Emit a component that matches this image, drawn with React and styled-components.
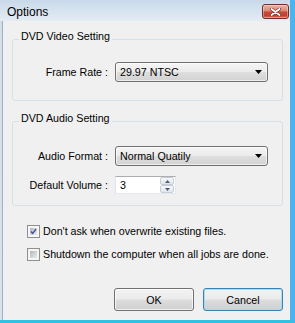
import React from 'react';
import styled, { createGlobalStyle } from 'styled-components';

const Global = createGlobalStyle`
  html, body { margin: 0; padding: 0; background: #ffffff; }
  body { font-family: "Liberation Sans", Arial, sans-serif; color: #000; }
  * { box-sizing: border-box; }
`;

const Window = styled.div`
  width: 295px;
  height: 323px;
  display: flex;
  flex-direction: column;
  background: linear-gradient(#c3d4e6, #d3e0ec 30px, #d6e3ef);
  border-right: 5px solid #4bb4ee;
  border-bottom: 3px solid #2fc2e3;
`;

const TitleBar = styled.div`
  height: 21px;
  flex: none;
  display: flex;
  align-items: flex-start;
  justify-content: space-between;
  padding: 0 1px 0 7px;
  background: linear-gradient(#c9d9ea, #e4ecf4);
`;

const Title = styled.span`
  margin-top: 5px;
  font-size: 12px;
  line-height: 14px;
  color: #000;
`;

const CloseButton = styled.div`
  margin-top: 4px;
  width: 27px;
  height: 15px;
  border: 1px solid #6e2e27;
  border-radius: 3px;
  background: linear-gradient(#eab1a1 0%, #dc8c78 45%, #c94c3d 52%, #c33f31 80%, #d56d55 100%);
  box-shadow: inset 0 0 0 1px rgba(255, 255, 255, 0.35);
  display: flex;
  align-items: center;
  justify-content: center;
`;

const Client = styled.div`
  flex: 1;
  margin-left: 2px;
  border-left: 1px solid #a3afbb;
  background: #f0f0f0;
  display: flex;
  flex-direction: column;
  padding: 9px 7px 9px 9px;
`;

const Group = styled.fieldset`
  margin: ${p => p.$mt || 0}px 0 0 0;
  padding: ${p => p.$pt}px 0 ${p => p.$pb}px 0;
  border: 1px solid #d5dfe5;
  border-radius: 3px;
  min-width: 0;
`;

const Legend = styled.legend`
  margin-left: 6px;
  padding: 0 2px 6px 2px;
  font-size: 10.7px;
  line-height: 12px;
`;

const FieldGrid = styled.div`
  display: grid;
  grid-template-columns: 95px 153px;
  column-gap: 7px;
  row-gap: ${p => p.$gap || 0}px;
  align-items: center;
`;

const FieldLabel = styled.span`
  text-align: right;
  font-size: 10.7px;
  line-height: 13px;
`;

const Combo = styled.div`
  height: 20px;
  border: 1px solid #707070;
  border-radius: 3px;
  background: linear-gradient(#f5f5f5 0%, #ebebeb 48%, #dedede 52%, #d2d2d2 100%);
  box-shadow: inset 0 0 0 1px rgba(255, 255, 255, 0.6);
  display: flex;
  align-items: center;
  justify-content: space-between;
  padding: 0 5px 0 4px;
  font-size: 10.7px;
`;

const Spinner = styled.div`
  width: 61px;
  height: 18px;
  display: flex;
  background: #fff;
  border: 1px solid;
  border-color: #abadb3 #e3e9ef #e3e9ef #e2e3ea;
`;

const SpinValue = styled.span`
  flex: 1;
  display: flex;
  align-items: center;
  padding-left: 4px;
  font-size: 10.7px;
`;

const SpinButtons = styled.div`
  width: 15px;
  display: flex;
  flex-direction: column;
  gap: 0;
  padding: 0 1px 0 0;
`;

const SpinButton = styled.div`
  flex: 1;
  border: 1px solid #c5ced8;
  border-radius: 2px;
  background: linear-gradient(#f7f8fa, #e1e6eb);
  display: flex;
  align-items: center;
  justify-content: center;
`;

const Options = styled.div`
  margin: 19px 0 0 15px;
  display: flex;
  flex-direction: column;
  gap: 10px;
`;

const CheckRow = styled.label`
  display: flex;
  align-items: center;
  gap: 3px;
  height: 13px;
  font-size: 10.7px;
  line-height: 13px;
`;

const Box = styled.span`
  width: 13px;
  height: 13px;
  flex: none;
  border: 1px solid #8e8f8f;
  padding: 2px;
  background: linear-gradient(135deg, #b3b8be, #ebebec) content-box, #f6f6f6;
  display: flex;
  align-items: center;
  justify-content: center;
`;

const ButtonRow = styled.div`
  margin-top: auto;
  display: flex;
  justify-content: flex-end;
  gap: 9px;
`;

const Button = styled.div`
  width: 80px;
  height: 23px;
  border: 1px solid ${p => (p.$default ? '#3c7fb1' : '#707070')};
  border-radius: 3px;
  background: linear-gradient(#f3f3f3 0%, #ebebeb 48%, #dddddd 52%, #cfcfcf 100%);
  box-shadow: inset 0 0 0 1px ${p => (p.$default ? 'rgba(160,220,250,0.9)' : 'rgba(255,255,255,0.7)')};
  display: flex;
  align-items: center;
  justify-content: center;
  font-size: 10.7px;
`;

const DownArrow = () => (
  <svg width="7" height="4" viewBox="0 0 7 4">
    <path d="M0 0 H7 L3.5 4 Z" fill="#000" />
  </svg>
);

const SmallArrow = ({ up }) => (
  <svg width="5" height="3" viewBox="0 0 5 3">
    <path d={up ? 'M0 3 H5 L2.5 0 Z' : 'M0 0 H5 L2.5 3 Z'} fill="#4d5d78" />
  </svg>
);

const CheckMark = () => (
  <svg width="9" height="9" viewBox="0 0 9 9">
    <path d="M1.3 4.6 L3.4 7 L7.8 1.4" fill="none" stroke="#3f5596" strokeWidth="1.9" />
  </svg>
);

const CloseGlyph = () => (
  <svg width="11" height="8" viewBox="0 0 11 8">
    <path d="M1.5 1 L9.5 7 M9.5 1 L1.5 7" stroke="#6a241d" strokeWidth="3" strokeLinecap="round" />
    <path d="M1.5 1 L9.5 7 M9.5 1 L1.5 7" stroke="#ffffff" strokeWidth="1.8" strokeLinecap="round" />
  </svg>
);

export default function App() {
  return (
    <>
      <Global />
      <Window>
        <TitleBar>
          <Title>Options</Title>
          <CloseButton>
            <CloseGlyph />
          </CloseButton>
        </TitleBar>
        <Client>
          <Group $pt={14} $pb={18}>
            <Legend>DVD Video Setting</Legend>
            <FieldGrid>
              <FieldLabel>Frame Rate :</FieldLabel>
              <Combo>
                <span>29.97 NTSC</span>
                <DownArrow />
              </Combo>
            </FieldGrid>
          </Group>
          <Group $mt={11} $pt={16} $pb={11}>
            <Legend>DVD Audio Setting</Legend>
            <FieldGrid $gap={10}>
              <FieldLabel>Audio Format :</FieldLabel>
              <Combo>
                <span>Normal Quatily</span>
                <DownArrow />
              </Combo>
              <FieldLabel>Default Volume :</FieldLabel>
              <Spinner>
                <SpinValue>3</SpinValue>
                <SpinButtons>
                  <SpinButton><SmallArrow up /></SpinButton>
                  <SpinButton><SmallArrow /></SpinButton>
                </SpinButtons>
              </Spinner>
            </FieldGrid>
          </Group>
          <Options>
            <CheckRow>
              <Box><CheckMark /></Box>
              Don't ask when overwrite existing files.
            </CheckRow>
            <CheckRow>
              <Box />
              Shutdown the computer when all jobs are done.
            </CheckRow>
          </Options>
          <ButtonRow>
            <Button>OK</Button>
            <Button $default>Cancel</Button>
          </ButtonRow>
        </Client>
      </Window>
    </>
  );
}
